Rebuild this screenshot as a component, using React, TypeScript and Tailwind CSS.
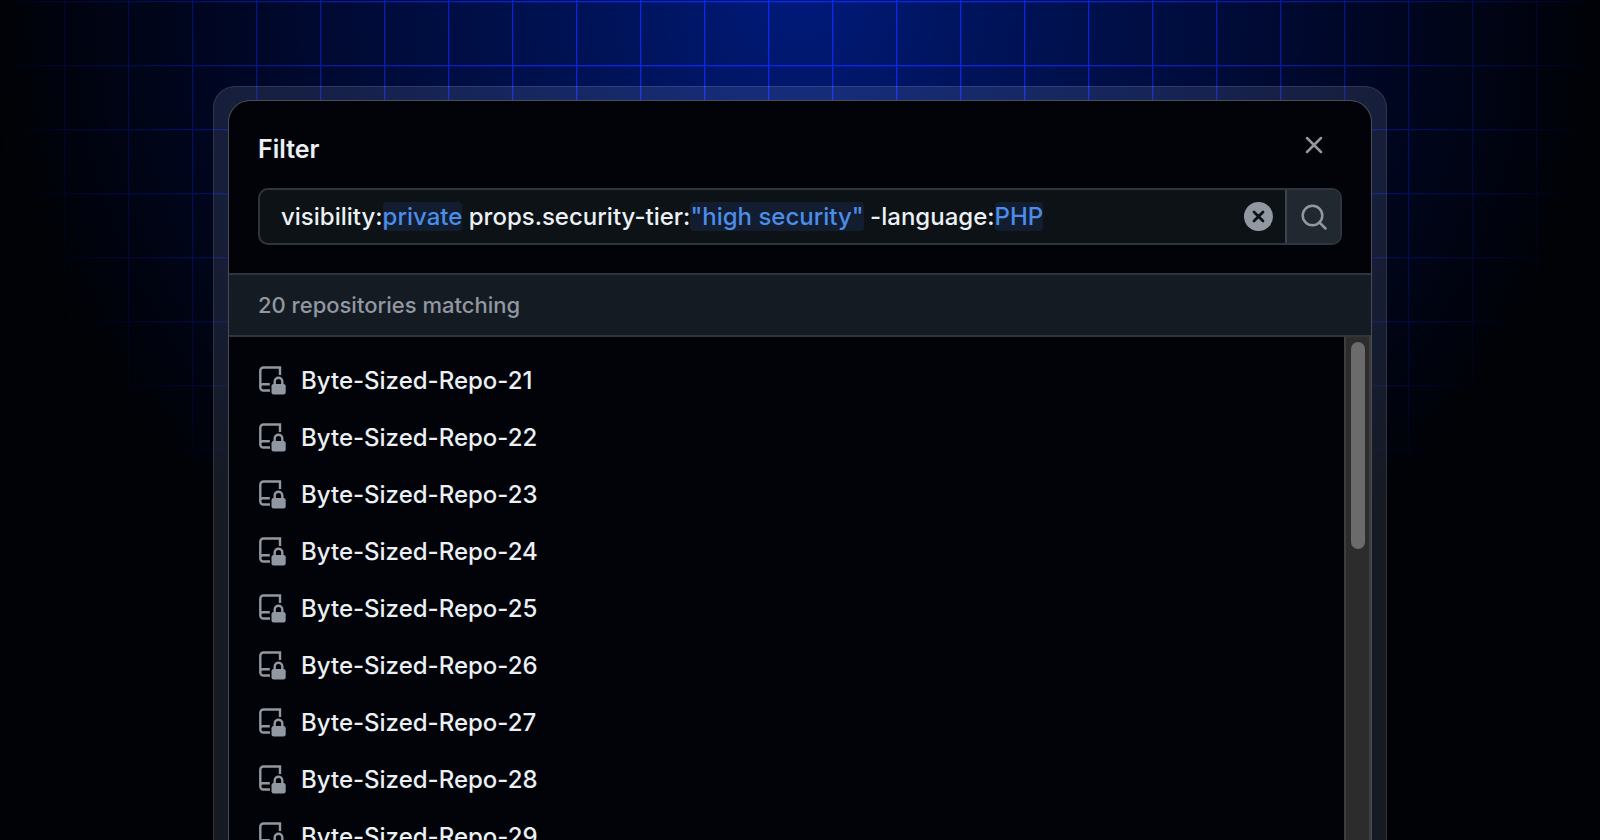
import React, { useState } from "react";

const repositories = [21, 22, 23, 24, 25, 26, 27, 28, 29].map((n) => `Byte-Sized-Repo-${n}`);

function RepoLockedIcon() {
  return (
    <svg width="28" height="29" viewBox="0 0 28 29" fill="none" aria-hidden="true" className="shrink-0 text-[#9198a1]">
      <path d="M22 9V1.500H5.500A3.200 3.200 0 0 0 2.300 4.700v16.800A3 3 0 0 0 5.300 24.500H12M2.300 20.500A2.500 2.500 0 0 1 4.800 18.200h7" stroke="currentColor" strokeWidth="2.400" />
      <path d="M17 19v-3.500a3.800 3.800 0 0 1 7.600 0v3.500" transform="translate(-.3 0)" stroke="currentColor" strokeWidth="2.400" />
      <rect x="13.500" y="18" width="14.200" height="10.500" rx="2.200" fill="currentColor" />
    </svg>
  );
}

function Token({ name, value }: { name: string; value: string }) {
  return (
    <>
      {name}:<span className="rounded-[4px] bg-[#121d2f] text-[#4b8de8]">{value}</span>
    </>
  );
}

export default function App() {
  const [query, setQuery] = useState('visibility:private props.security-tier:"high security" -language:PHP');
  const parts = query.split(/(\S+?:(?:"[^"]*"|\S*))/);

  return (
    <main className="relative isolate flex h-screen justify-center overflow-hidden bg-[#000206] px-4 pt-[86px] font-['Inter',sans-serif] text-[#ebf0f5]">
      <div className="absolute inset-0 -z-20 bg-[radial-gradient(ellipse_800px_740px_at_50%_0%,#001a7a_0%,#001358_25%,#000c3c_50%,#000620_75%,transparent_100%)]" />
      <div className="absolute inset-0 -z-10 bg-[linear-gradient(to_right,#0d28f0_1px,#0d28f055_1px,#0d28f055_2px,transparent_2px),linear-gradient(to_bottom,#0d28f0_1px,#0d28f055_1px,#0d28f055_2px,transparent_2px)] bg-[size:64px_64px] bg-[position:0_1px] [mask-image:radial-gradient(ellipse_820px_740px_at_50%_0%,black_0%,rgba(0,0,0,0.85)_30%,rgba(0,0,0,0.55)_60%,rgba(0,0,0,0.22)_82%,transparent_100%)]" />

      <div className="flex w-full max-w-[1174px] flex-col rounded-t-[22px] border border-b-0 border-white/10 bg-[#b8ccf5]/12 px-[14px] pt-[13px]">
        <section aria-label="Filter repositories" className="flex min-h-0 flex-1 flex-col overflow-hidden rounded-t-[22px] border border-b-0 border-[#474d54] bg-[#020308]">
          <header className="px-[29px] pt-4 pb-7">
            <div className="mb-[7px] flex items-start justify-between">
              <h1 className="text-[25px] leading-[64px] font-semibold">Filter</h1>
              <button type="button" aria-label="Close" className="flex size-14 items-center justify-center text-[#9198a1]">
                <svg width="18" height="18" viewBox="0 0 18 18" aria-hidden="true">
                  <path d="M2 2l14 14M16 2L2 16" stroke="currentColor" strokeWidth="2.500" strokeLinecap="round" />
                </svg>
              </button>
            </div>
            <div className="flex h-[57px] overflow-hidden rounded-[10px] border-2 border-[#2f353d] bg-[#0d1216]">
              <div className="relative flex min-w-0 flex-1 items-center overflow-hidden px-[21px] text-[24px] leading-7 font-medium whitespace-pre">
                <div aria-hidden="true">
                  {parts.map((part, i) => {
                    const split = part.indexOf(":");
                    return split < 0 ? part : <Token key={i} name={part.slice(0, split)} value={part.slice(split + 1)} />;
                  })}
                </div>
                <input
                  aria-label="Filter query"
                  value={query}
                  onChange={(e) => setQuery(e.target.value)}
                  className="absolute inset-0 bg-transparent px-[21px] text-transparent caret-white outline-none"
                />
              </div>
              <button type="button" aria-label="Clear query" onClick={() => setQuery("")} className="flex w-[53px] items-center justify-center">
                <svg width="29" height="29" viewBox="0 0 29 29" aria-hidden="true">
                  <circle cx="14.5" cy="14.5" r="14.500" fill="#9198a1" />
                  <path d="M10 10l9 9M19 10l-9 9" stroke="#0d1117" strokeWidth="2.800" strokeLinecap="round" />
                </svg>
              </button>
              <button type="button" aria-label="Search" className="flex w-[55px] items-center justify-center border-l-2 border-[#3d444d] bg-[#212830] text-[#9198a1]">
                <svg width="26" height="26" viewBox="0 0 26 26" fill="none" stroke="currentColor" strokeWidth="2.500" aria-hidden="true">
                  <circle cx="11.500" cy="11.500" r="9.800" />
                  <path d="M18.500 18.500l6 6" strokeLinecap="round" />
                </svg>
              </button>
            </div>
          </header>
          <p className="border-y-2 border-[#2f353d] bg-[#151b23] px-[29px] text-[22px] leading-[60px] font-[450] text-[#9198a1]">20 repositories matching</p>
          <div className="flex min-h-0 flex-1">
            <ul className="flex-1 overflow-hidden px-[29px] pt-[15px]">
              {repositories.map((name) => (
                <li key={name} className="flex h-[57px] items-center gap-[15px]">
                  <RepoLockedIcon />
                  <a href="#repo" className="text-[24px] leading-8 font-medium">{name}</a>
                </li>
              ))}
            </ul>
            <div className="flex w-[27px] justify-center border-x-2 border-[#3d3d3d] bg-[#2c2c2c] pt-[5px]">
              <div className="h-[207px] w-[14px] rounded-full bg-[#6b6b6b]" />
            </div>
          </div>
        </section>
      </div>
    </main>
  );
}
